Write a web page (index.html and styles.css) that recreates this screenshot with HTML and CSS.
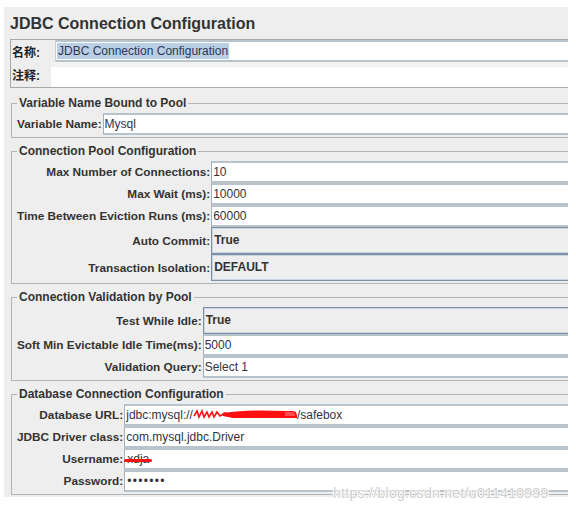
FILE: index.html
```html
<!DOCTYPE html>
<html lang="zh">
<head>
<meta charset="utf-8">
<title>JDBC Connection Configuration</title>
<link rel="stylesheet" href="styles.css">
</head>
<body>
<div class="page">
  <div class="panel">
    <h1 class="title">JDBC Connection Configuration</h1>
    <div class="namebox">
      <div class="nrow">
        <span class="nlabel nl1">名称:</span>
        <div class="nfield"><span class="sel">JDBC Connection Configuration</span></div>
      </div>
      <div class="nrow">
        <span class="nlabel nl2">注释:</span>
        <div class="cfield"></div>
      </div>
    </div>

    <fieldset class="group g1">
      <legend>Variable Name Bound to Pool</legend>
      <div class="form">
        <span class="lbl">Variable Name:</span><div class="tf">Mysql</div>
      </div>
    </fieldset>

    <fieldset class="group">
      <legend>Connection Pool Configuration</legend>
      <div class="form">
        <span class="lbl">Max Number of Connections:</span><div class="tf">10</div>
        <span class="lbl">Max Wait (ms):</span><div class="tf">10000</div>
        <span class="lbl">Time Between Eviction Runs (ms):</span><div class="tf">60000</div>
        <span class="lbl">Auto Commit:</span><div class="cb">True</div>
        <span class="lbl">Transaction Isolation:</span><div class="cb">DEFAULT</div>
      </div>
    </fieldset>

    <fieldset class="group">
      <legend>Connection Validation by Pool</legend>
      <div class="form">
        <span class="lbl">Test While Idle:</span><div class="cb">True</div>
        <span class="lbl">Soft Min Evictable Idle Time(ms):</span><div class="tf">5000</div>
        <span class="lbl">Validation Query:</span><div class="tf">Select 1</div>
      </div>
    </fieldset>

    <fieldset class="group">
      <legend>Database Connection Configuration</legend>
      <div class="form">
        <span class="lbl">Database URL:</span>
        <div class="tf">jdbc:mysql://<span class="redact"><svg width="104" height="14" viewBox="0 0 104 14"><path d="M1 9 L4 4 L6 10 L9 4 L11 10 L14 5 L16 10 L19 5 L21 10 L24 5 L27 9 L32 6 L36 8" fill="none" stroke="#ff1010" stroke-width="1.6"/><path d="M30 6 C50 3 70 3 92 4 L100 4 C103 4 104 7 104 9 L104 11 L40 11 L30 9 Z" fill="#ff1010"/><path d="M92 6 L101 6 M92 8 L102 8" stroke="#ffb0b0" stroke-width="0.8"/></svg></span>/safebox</div>
        <span class="lbl">JDBC Driver class:</span><div class="tf">com.mysql.jdbc.Driver</div>
        <span class="lbl">Username:</span><div class="tf"><span class="struck">xdja</span></div>
        <span class="lbl">Password:</span><div class="tf pw">•••••••</div>
      </div>
    </fieldset>
  </div>
  <div class="watermark">https://blog.csdn.net/u011410999</div>
</div>
</body>
</html>
```

FILE: styles.css
```css
* { box-sizing: border-box; }

body {
  margin: 0;
  background: #ffffff;
  font-family: "Liberation Sans", Arial, "Noto Sans CJK SC", sans-serif;
  color: #333333;
}

.page {
  position: relative;
  padding: 7px 8px 0 4px;
  height: 511px;
}

.panel {
  width: 564px;
  height: 490px;
  background: #eeeeee;
  overflow: hidden;
  padding-top: 7px;
}

.title {
  margin: 0 0 0 6px;
  font-size: 16px;
  font-weight: bold;
  line-height: 20px;
  color: #333333;
}

.namebox {
  margin: 5px 0 0 6px;
  border: 1px solid #a9a9a9;
  border-right: none;
}

.nrow {
  display: flex;
  align-items: stretch;
}

.nlabel {
  font-family: "Liberation Sans", "Noto Sans CJK SC", sans-serif;
  font-weight: bold;
  font-size: 12px;
  padding-left: 1px;
  display: flex;
  align-items: center;
  color: #222222;
}

.nl1 { width: 44px; }
.nl2 { width: 40px; }

.nfield {
  flex: 1;
  height: 22px;
  background: #ffffff;
  border-top: 2px solid #b9c3cc;
  border-bottom: 2px solid #b9c3cc;
  border-left: 1px solid #c9d1d8;
  padding-left: 1px;
  font-size: 12px;
  line-height: 18px;
}

.sel {
  background: #b8cfe5;
  color: #333355;
  padding: 1px 1px;
}

.cfield {
  flex: 1;
  height: 25px;
  background: #ffffff;
  border-top: 5px solid #f3f3f3;
}

.group {
  margin: 6px -80px 0 7px;
  padding: 2px 0 2px 5px;
  border: 1px solid #b3b3b3;
  min-width: 0;
}

.g1 { margin-top: 8px; }

legend {
  padding: 0 2px;
  font-size: 12px;
  font-weight: bold;
  line-height: 15px;
  color: #333333;
}

.form {
  display: grid;
  grid-template-columns: max-content 1fr;
}

.lbl {
  display: flex;
  align-items: center;
  justify-content: flex-end;
  font-size: 11.8px;
  font-weight: bold;
  white-space: nowrap;
  padding-right: 1px;
  color: #333333;
}

.tf {
  height: 22px;
  background: #ffffff;
  border-top: 2px solid #b9c3cc;
  border-bottom: 2px solid #b9c3cc;
  border-left: 1px solid #a3afba;
  padding-left: 1px;
  font-size: 12px;
  line-height: 18px;
  white-space: nowrap;
  color: #333340;
}

.cb {
  height: 27px;
  background: #eeeeee;
  border: 1px solid #7d91a6;
  box-shadow: inset 1px 1px 0 #c9d5e1, inset 0 -1px 0 #c9d5e1;
  padding-left: 2px;
  font-size: 12px;
  font-weight: bold;
  line-height: 25px;
  color: #333333;
}

.redact {
  display: inline-block;
  width: 104px;
  height: 14px;
  vertical-align: -2px;
}

.redact svg { display: block; }

.struck {
  position: relative;
  padding-left: 1px;
}

.struck::after {
  content: "";
  position: absolute;
  left: -2px;
  right: -3px;
  top: 7px;
  height: 3px;
  border-radius: 2px;
  background: #ff1010;
}

.pw {
  letter-spacing: 1.3px;
  padding-left: 2px;
}

.watermark {
  position: absolute;
  left: 333px;
  top: 485px;
  font-size: 14px;
  line-height: 16px;
  color: #cfcfcf;
  letter-spacing: 0.3px;
  text-shadow: 1px 0 0 #ffffff, -1px 0 0 #ffffff, 0 1px 0 #ffffff, 0 -1px 0 #ffffff;
  white-space: nowrap;
}
```
